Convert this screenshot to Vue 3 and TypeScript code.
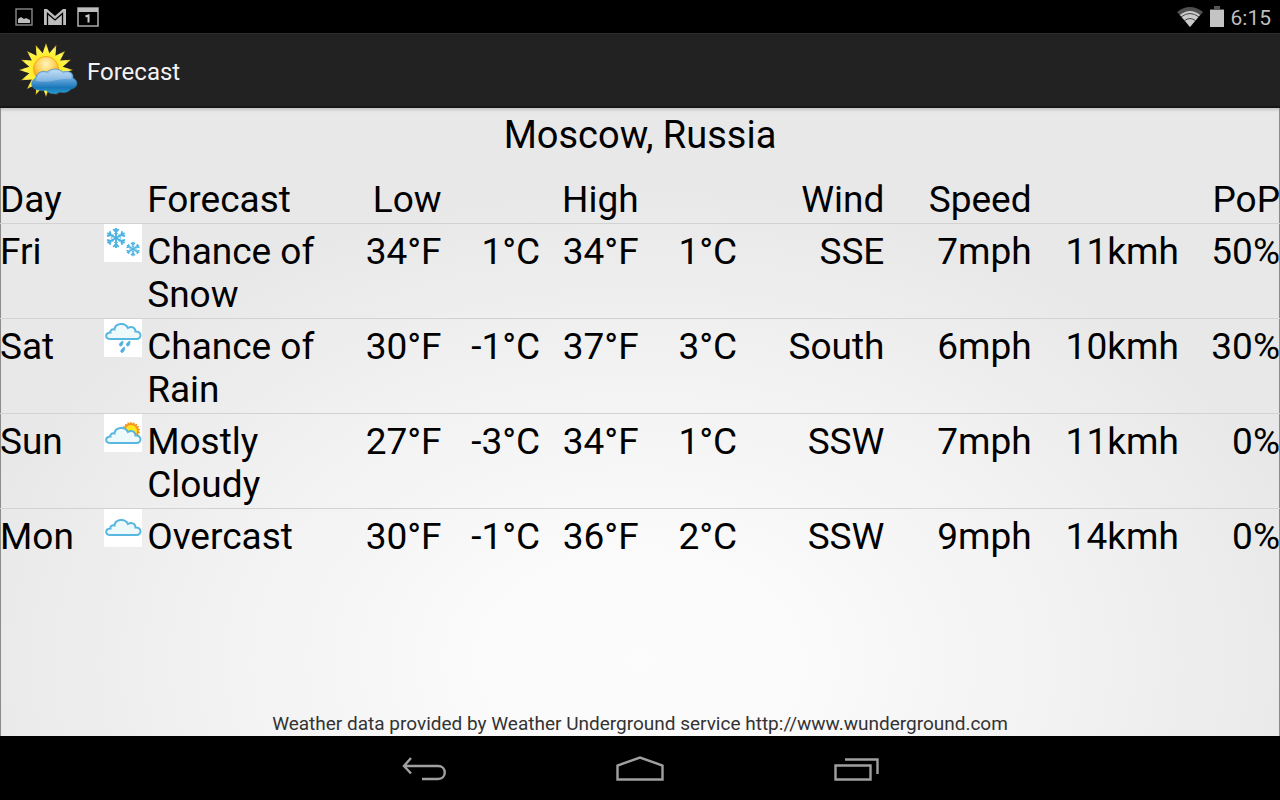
<script setup lang="ts">
type Sky = 'snow' | 'rain' | 'mostly' | 'overcast'

interface Day {
  day: string
  sky: Sky
  text: string
  lowF: number
  lowC: number
  highF: number
  highC: number
  wind: string
  mph: number
  kmh: number
  pop: number
}

const days: Day[] = [
  { day: 'Fri', sky: 'snow', text: 'Chance of Snow', lowF: 34, lowC: 1, highF: 34, highC: 1, wind: 'SSE', mph: 7, kmh: 11, pop: 50 },
  { day: 'Sat', sky: 'rain', text: 'Chance of Rain', lowF: 30, lowC: -1, highF: 37, highC: 3, wind: 'South', mph: 6, kmh: 10, pop: 30 },
  { day: 'Sun', sky: 'mostly', text: 'Mostly Cloudy', lowF: 27, lowC: -3, highF: 34, highC: 1, wind: 'SSW', mph: 7, kmh: 11, pop: 0 },
  { day: 'Mon', sky: 'overcast', text: 'Overcast', lowF: 30, lowC: -1, highF: 36, highC: 2, wind: 'SSW', mph: 9, kmh: 14, pop: 0 },
]

// Cloud outline; its top is at y 11 and its flat base at y 26.
const cloud = 'M6.500 26H32.500C38 26 38 18 31.500 18.500C31.500 14 27 13 24 15C21 9 11 10 10.500 16.500C8 16 6 17 6.500 19.500C0.500 20 1 26 6.500 26Z'

// Zigzag outline of a sun: alternating outer and inner points.
function star(cx: number, cy: number, outer: number, inner: number, rays: number): string {
  const points: string[] = []
  for (let i = 0; i < rays * 2; i++) {
    const r = i % 2 === 0 ? outer : inner
    const a = (Math.PI * i) / rays - Math.PI / 2
    points.push(`${(cx + r * Math.cos(a)).toFixed(2)},${(cy + r * Math.sin(a)).toFixed(2)}`)
  }
  return points.join(' ')
}

const logoRays = star(29, 31, 27, 17, 16)
const smallRays = star(27, 17, 9.5, 7.5, 18)
const spokes = [0, 60, 120, 180, 240, 300]
const flakes = ['translate(12 14)', 'translate(29 25) scale(0.72)']
</script>

<template>
  <div class="screen">
    <header class="status">
      <div class="notices">
        <svg width="18" height="18" viewBox="0 0 18 18" aria-hidden="true">
          <rect x="1" y="1" width="16" height="16" fill="none" stroke="#8a8a8a" stroke-width="1.4" />
          <path d="M3 15V11L6 9L9 11L11 10L15 12V15Z" fill="#bdbdbd" />
        </svg>
        <svg width="22" height="18" viewBox="0 0 22 18" aria-hidden="true">
          <path d="M0 1H22V17H0Z" fill="#bdbdbd" />
          <path d="M3.500 17V5.500L11 12L18.500 5.500V17" fill="none" stroke="#000" stroke-width="1.300" />
          <path d="M2.500 0.500L11 8L19.500 0.500Z" fill="#000" />
        </svg>
        <svg width="22" height="20" viewBox="0 0 22 20" aria-hidden="true">
          <path d="M1 1H21V19H1Z" fill="none" stroke="#a9a9a9" stroke-width="1.6" />
          <path d="M1 1H21V5H1Z" fill="#bdbdbd" />
          <path d="M8.500 9.500L11.500 8.500V15.500" fill="none" stroke="#c8c8c8" stroke-width="2" />
        </svg>
      </div>
      <div class="system">
        <svg width="26" height="20" viewBox="0 0 26 20" aria-hidden="true">
          <path d="M0 5Q13 -5 26 5L13 20Z" fill="#505050" />
          <path d="M3 8Q13 0 23 8L13 20Z" fill="#cacaca" />
          <path d="M4 10Q13 3 22 10M7 14Q13 9 19 14" fill="none" stroke="#444" stroke-width="1" />
        </svg>
        <svg width="14" height="21" viewBox="0 0 14 21" aria-hidden="true">
          <path d="M4 0H10V3H14V5H0V3H4Z" fill="#555" />
          <path d="M0 4H14V21H0Z" fill="#c4c4c4" />
        </svg>
        <time>6:15</time>
      </div>
    </header>

    <div class="bar">
      <svg class="logo" width="62" height="62" viewBox="0 0 62 62" aria-hidden="true">
        <defs>
          <radialGradient id="rays">
            <stop offset="0.55" stop-color="#ffee2a" />
            <stop offset="0.8" stop-color="#fff45a" />
            <stop offset="1" stop-color="#c9a400" />
          </radialGradient>
          <radialGradient id="disc" cx="0.5" cy="0.3" r="0.7">
            <stop offset="0" stop-color="#fff3c0" />
            <stop offset="0.5" stop-color="#ffd35c" />
            <stop offset="1" stop-color="#f79a00" />
          </radialGradient>
          <linearGradient id="puff" x1="0" y1="0" x2="0" y2="1">
            <stop offset="0" stop-color="#b5d6f5" />
            <stop offset="0.45" stop-color="#5b9fd8" />
            <stop offset="0.75" stop-color="#1878b8" />
            <stop offset="1" stop-color="#2a9ccb" />
          </linearGradient>
        </defs>
        <polygon :points="logoRays" fill="url(#rays)" />
        <circle cx="29" cy="30" r="12.5" fill="url(#disc)" stroke="#f8a51c" stroke-width="1" />
        <path d="M22 51C14 51 12 42 19 39C19 34 25 31 30 33C34 29 42 29 46 33C52 31 57 34 56 39C62 42 61 49 54 50C51 54 46 54 43 53C39 56 31 55 29 51C27 52 24 52 22 51Z" fill="url(#puff)" stroke="#3180b8" stroke-width="0.600" />
        <path d="M19 42C19 35 26 32 31 35C35 30 43 30 46 35C51 32 56 35 54 40C43 38 33 45 19 42Z" fill="#fff" opacity="0.25" />
      </svg>
      <h1>Forecast</h1>
    </div>

    <main>
      <h2>Moscow, Russia</h2>
      <table>
        <colgroup>
          <col class="c-day" /><col class="c-icon" /><col class="c-text" />
          <col class="c-temp" /><col class="c-temp" /><col class="c-temp" /><col class="c-temp" />
          <col class="c-wind" /><col class="c-wind" /><col class="c-wind" /><col />
        </colgroup>
        <thead>
          <tr>
            <th class="left" scope="col">Day</th>
            <td></td>
            <th class="left" scope="col">Forecast</th>
            <th scope="col">Low</th>
            <td></td>
            <th scope="col">High</th>
            <td></td>
            <th scope="col">Wind</th>
            <th scope="col">Speed</th>
            <td></td>
            <th scope="col">PoP</th>
          </tr>
        </thead>
        <tbody>
          <tr v-for="d in days" :key="d.day">
            <th class="left" scope="row">{{ d.day }}</th>
            <td class="sky">
              <svg width="38" height="38" viewBox="0 0 38 38" aria-hidden="true">
                <rect width="38" height="38" fill="#fff" />
                <g v-if="d.sky === 'snow'" fill="none" stroke="#4db3e0" stroke-width="1.9">
                  <g v-for="f in flakes" :key="f" :transform="f">
                    <path v-for="s in spokes" :key="s" :transform="`rotate(${s})`" d="M0 0V-10M-2.800 -8.800L0 -6L2.800 -8.800" />
                    <path v-for="s in spokes" :key="`arm${s}`" :transform="`rotate(${s})`" d="M-1.800 -4.800L0 -3L1.800 -4.800" stroke-width="1" />
                  </g>
                </g>
                <g v-else-if="d.sky === 'rain'">
                  <path :d="cloud" transform="translate(0 -6)" fill="#eef9fc" stroke="#58b7df" stroke-width="2" />
                  <path d="M19 22C19 26 18 27 16.500 27S14.500 24 19 22ZM26 22C26 26 25 27 23.500 27S21.500 24 26 22ZM20.500 28C20.500 32 19.500 33.500 18 33.500S15.500 31 20.500 28Z" fill="#4fb0de" stroke="#4fb0de" stroke-width="0.800" />
                </g>
                <g v-else-if="d.sky === 'mostly'">
                  <polygon :points="smallRays" fill="#f7931e" />
                  <circle cx="27" cy="17" r="6" fill="#ffe51e" />
                  <path :d="cloud" transform="translate(0 3)" fill="#eef9fc" stroke="#58b7df" stroke-width="2" />
                </g>
                <path v-else :d="cloud" fill="#eef9fc" stroke="#58b7df" stroke-width="2" />
              </svg>
            </td>
            <td class="left">{{ d.text }}</td>
            <td>{{ d.lowF }}°F</td>
            <td>{{ d.lowC }}°C</td>
            <td>{{ d.highF }}°F</td>
            <td>{{ d.highC }}°C</td>
            <td>{{ d.wind }}</td>
            <td>{{ d.mph }}mph</td>
            <td>{{ d.kmh }}kmh</td>
            <td>{{ d.pop }}%</td>
          </tr>
        </tbody>
      </table>
      <p class="credit">
        Weather data provided by Weather Underground service
        <a href="http://www.wunderground.com">http://www.wunderground.com</a>
      </p>
    </main>

    <nav>
      <button type="button" aria-label="Back">
        <svg width="48" height="28" viewBox="0 0 48 28" fill="none" stroke="#a0a0a0" stroke-width="2.4">
          <path d="M11 2L4 10L11 17.500M4 10H38C47 10 47 23 38 23H22" />
        </svg>
      </button>
      <button type="button" aria-label="Home">
        <svg width="48" height="28" viewBox="0 0 48 28" fill="none" stroke="#a0a0a0" stroke-width="2.4">
          <path d="M1.500 23.500V9.500L24 1.500L46.500 9.500V23.500Z" />
        </svg>
      </button>
      <button type="button" aria-label="Recent apps">
        <svg width="48" height="28" viewBox="0 0 48 28" fill="none" stroke="#a0a0a0" stroke-width="2.4">
          <path d="M3.500 9.500H38.500V23.500H3.500ZM13 3.500H45.500V18" />
        </svg>
      </button>
    </nav>
  </div>
</template>

<style>
body {
  margin: 0;
  background: #000;
}
</style>

<style scoped>
.screen {
  display: flex;
  flex-direction: column;
  min-height: 100vh;
  font-family: Roboto, sans-serif;
  color: #000;
}

.status {
  display: flex;
  justify-content: space-between;
  align-items: center;
  height: 33px;
  padding: 0 9px 0 15px;
  background: #000;
}

.notices,
.system {
  display: flex;
  align-items: center;
}

.notices {
  gap: 11px;
}

.system {
  gap: 7px;
}

time {
  padding-top: 3px;
  font-size: 21px;
  line-height: 24px;
  color: #bebebe;
}

.bar {
  display: flex;
  align-items: center;
  gap: 8px;
  box-sizing: border-box;
  height: 75px;
  padding: 0 17px;
  background: #222;
  border-top: 1px solid #2e2e2e;
  border-bottom: 2px solid #161616;
}

h1 {
  margin: 0;
  padding-top: 4px;
  font-size: 24px;
  line-height: 28px;
  font-weight: 400;
  color: #f3f3f3;
}

main {
  display: flex;
  flex-direction: column;
  flex: 1;
  background: radial-gradient(ellipse 54% 76% at 50% 88%, #fcfcfc 0, #fafafa 25%, #f0f0f0 70%, #e8e8e8 100%);
  box-shadow: inset 1px 0 #8c8c8c, inset -1px 0 #8c8c8c, inset 0 3px 3px -1px #c4c4c4;
}

h2 {
  margin: 0;
  padding: 6px 0 15px;
  font-size: 38px;
  line-height: 43px;
  font-weight: 400;
  text-align: center;
}

table {
  width: 100%;
  table-layout: fixed;
  border-collapse: separate;
  border-spacing: 0;
  font-size: 37px;
  line-height: 43px;
}

.c-day {
  width: 8.1%;
}

.c-icon {
  width: 3.4%;
}

.c-text {
  width: 15.3%;
}

.c-temp {
  width: 7.7%;
}

.c-wind {
  width: 11.5%;
}

th,
td {
  padding: 6px 0 2px;
  font-weight: 400;
  text-align: right;
  vertical-align: top;
  white-space: nowrap;
}

th.left,
td.left {
  text-align: left;
  white-space: normal;
}

tbody th,
tbody td {
  border-top: 1px solid #d2d2d2;
}

td.sky {
  padding: 0;
  text-align: left;
}

.sky svg {
  display: block;
}

.credit {
  margin: auto 0 0;
  font-size: 19px;
  line-height: 25px;
  text-align: center;
  color: #333;
}

.credit a {
  color: inherit;
  text-decoration: none;
}

nav {
  display: flex;
  justify-content: center;
  gap: 120px;
  height: 64px;
  background: #000;
}

button {
  display: flex;
  align-items: center;
  justify-content: center;
  width: 96px;
  padding: 4px 0 0;
  border: 0;
  background: none;
}
</style>
